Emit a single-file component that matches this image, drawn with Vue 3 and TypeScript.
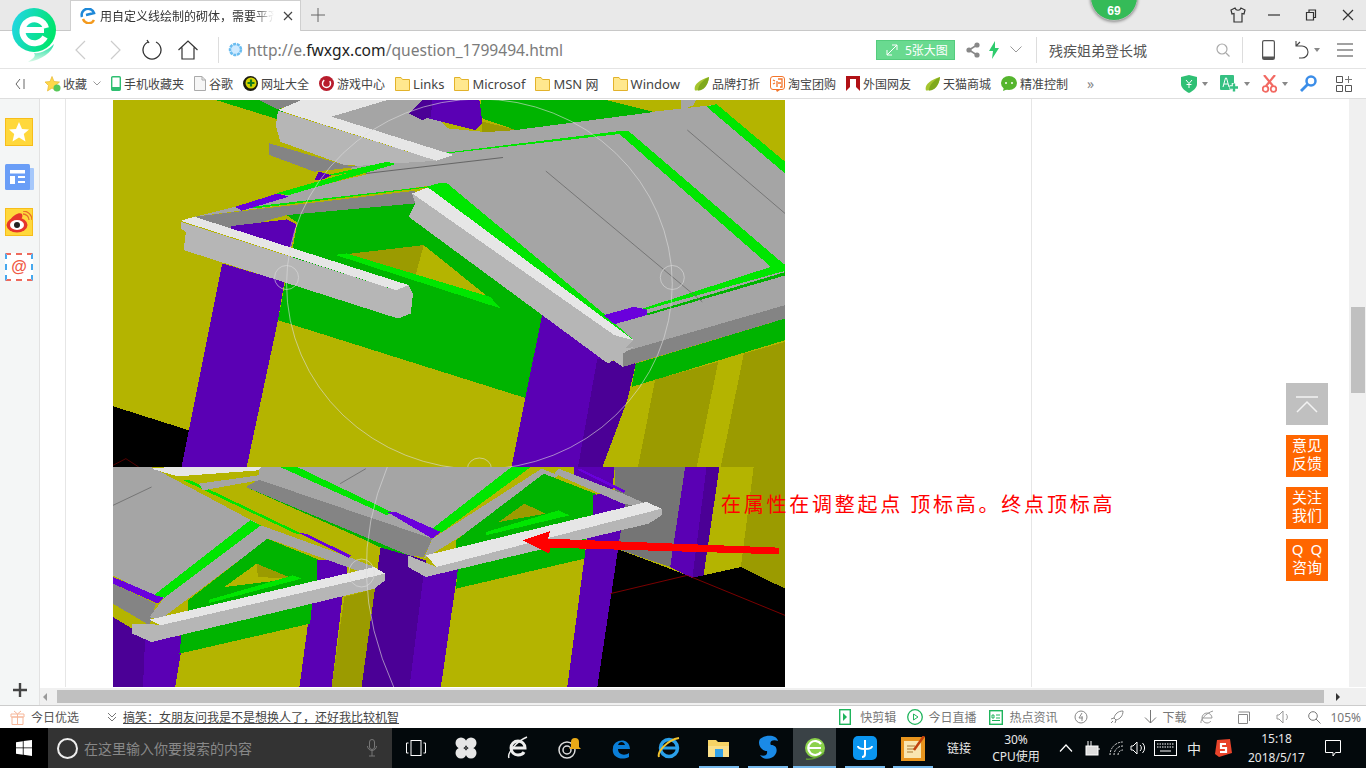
<script setup lang="ts">
type Shape = [string, string]
const Y = '#b4b400', DY = '#9b9b00', G = '#00b400', BG = '#00e600', P = '#5a00b4', DP = '#4b0096', BP = '#6a00dc'
const S = '#a5a5a5', L = '#b6b6b6', W = '#e6e6e6', D = '#848484'
const topShapes: Shape[] = [
  ['#000', '0,918 177,990 160,1100 0,1100'],
  [G, '240,0 345,0 400,30 385,58'],
  [D, '340,0 445,0 385,28'],
  [S, '510,50 640,0 720,0 780,85 860,95 1260,35 1400,15 1568,190 1568,620 1190,755 1145,645 780,250 190,350 600,220 540,200 755,170'],
  [DY, '862,65 945,90 860,97'],
  [G, '850,50 860,0 1150,0 1262,36 940,90'],
  [P, '690,40 722,0 855,0 862,68 845,90'],
  [DP, '690,40 722,0 745,0 742,50 722,60'],
  [S, '1325,0 1360,0 1355,15 1325,32'],
  [BG, '775,158 1190,92 1205,92 1195,100 780,160'],
  [BG, '1180,100 1202,92 1568,495 1568,515 1535,500'],
  [BG, '1385,20 1408,12 1568,185 1568,220'],
  [BG, '1220,632 1535,500 1568,490 1568,512 1245,628'],
  [G, '1245,640 1568,516 1568,526 1245,646'],
  [D, '190,350 705,272 705,310 405,345 275,392'],
  [G, '430,368 405,345 705,310 690,348 1002,645 962,893 385,660 402,545 420,440'],
  [DY, '545,462 725,435 705,530'],
  [Y, '725,435 880,595 705,530'],
  [BG, '518,464 545,460 880,590 905,625'],
  [P, '275,378 405,358 428,372 415,448 275,392'],
  [P, '255,490 400,545 385,660 312,1100 160,1100 177,990'],
  [P, '1002,640 1135,760 1155,790 1220,790 1200,900 1142,1100 930,1100 962,893'],
  [DP, '1130,775 1220,790 1200,900 1142,1100 1085,1100'],
  [D, '1190,755 1568,615 1568,655 1190,800'],
  [G, '1220,790 1568,655 1568,720 1210,860'],
  [Y, '1210,860 1568,722 1568,1100 1172,1100'],
  [DY, '1265,838 1412,785 1362,1100 1225,1100'],
  [DY, '1472,760 1568,725 1568,1100 1418,1100'],
  [BG, '380,280 640,185 660,192 410,285'],
  [BG, '310,322 730,260 760,250 780,250 1145,640 1215,720 735,262 330,325'],
  [BP, '285,320 385,280 410,290 300,332'],
  [BP, '1145,645 1215,620 1245,628 1245,645 1170,672'],
  [L, '705,310 698,280 1170,705 1215,720 1195,745 1180,770 1155,790 690,350'],
  [W, '698,280 735,262 1215,720 1190,712 1170,705'],
  [L, '1170,750 1195,745 1215,740 1190,760 1190,800 1168,782'],
  [L, '158,365 660,570 690,555 700,580 695,640 665,655 165,450 170,395 158,385'],
  [W, '158,362 190,350 690,555 660,570'],
  [D, '365,130 540,195 575,200 470,215 365,165'],
  [L, '385,32 755,182 575,197 540,195 390,125 380,75'],
  [W, '385,30 440,0 640,0 510,50 795,165 755,182'],
  [P, '470,240 480,215 510,225 490,238'],
  [BG, '500,225 640,185 660,192 520,225'],
]
const bottomShapes: Shape[] = [
  ['#000', '1130,680 1175,265 1340,345 1465,320 1568,385 1568,680'],
  ['#757575', '1170,20 1340,20 1300,320 1175,265'],
  [P, '1335,20 1415,20 1375,340 1350,352 1300,320'],
  [DP, '1385,20 1415,20 1378,345 1352,352'],
  [Y, '1415,20 1495,20 1465,320 1378,345'],
  [DY, '1495,20 1568,20 1568,385 1465,320'],
  [P, '1120,100 1195,125 1130,680 1060,680'],
  [P, '1075,20 1170,20 1165,95 1075,55'],
  [DY, '540,410 612,385 580,680 510,680'],
  [P, '475,300 545,310 510,680 435,680'],
  [DP, '625,255 730,300 700,680 580,680'],
  [P, '725,340 805,325 765,680 692,680'],
  [DP, '0,470 90,540 80,680 0,680'],
  [P, '75,530 165,525 145,680 70,680'],
  [G, '155,580 460,490 465,425 160,520'],
  [G, '800,385 1100,295 1105,225 805,320'],
  [G, '310,80 345,80 690,285 625,262 590,240'],
  [S, '0,20 90,20 345,195 110,420 0,345'],
  [BG, '95,405 320,180 345,195 120,412'],
  [BP, '0,350 100,405 118,412 105,430 0,370'],
  [D, '0,370 100,430 85,495 0,430'],
  [S, '120,412 345,195 362,235 110,478 85,470'],
  [G, '175,420 360,235 480,298 480,370 175,470'],
  [Y, '260,380 335,310 420,355'],
  [DY, '335,310 420,355 338,350'],
  [BG, '225,418 420,345 440,355 225,428'],
  [P, '475,300 545,295 545,345 475,370'],
  [S, '345,195 550,290 610,320 590,340 362,235'],
  [BG, '165,60 180,60 440,220 430,222'],
  [BP, '435,218 450,220 555,285 550,292'],
  [L, '45,490 85,490 110,495 635,340 635,360 610,385 90,545 45,520'],
  [W, '85,478 610,320 635,340 110,495'],
  [D, '310,80 340,58 745,235 725,290 690,285'],
  [S, '200,70 340,45 340,60 210,90'],
  [W, '90,25 130,20 345,20 340,30 150,48'],
  [S, '340,30 345,20 930,20 745,215 745,235 340,58'],
  [BG, '390,20 430,20 650,155 640,165'],
  [BG, '740,210 930,20 975,20 768,215'],
  [BP, '640,155 660,155 765,215 745,235'],
  [S, '745,235 1000,25 1040,45 765,265 725,295'],
  [G, '800,240 1005,40 1125,100 1120,185 800,280'],
  [DY, '900,185 960,130 1010,160'],
  [G, '960,130 1000,120 1040,150 1010,155'],
  [BG, '870,215 1040,150 1065,165 870,225'],
  [P, '1120,105 1140,100 1195,125 1195,150 1120,180'],
  [S, '1040,25 1190,100 1240,128 1215,135 1190,130 1030,40'],
  [BP, '1080,25 1090,25 1195,90 1192,98'],
  [L, '688,285 725,305 755,320 1280,145 1280,165 1250,190 730,350 688,320'],
  [W, '730,285 1245,125 1280,145 755,320'],
  ['#ff0000', '955,240 1020,212 1015,235 1555,262 1555,282 1020,262 1018,280'],
]
const bookmarks = [
  { text: '手机收藏夹', icon: 'phone', cls: '' },
  { text: '谷歌', icon: 'doc', cls: '' },
  { text: '网址大全', icon: 'nav', cls: '' },
  { text: '游戏中心', icon: 'game', cls: '' },
  { text: 'Links', icon: 'folder', cls: 'latin' },
  { text: 'Microsof', icon: 'folder', cls: 'latin' },
  { text: 'MSN 网', icon: 'folder', cls: 'latin wide' },
  { text: 'Window', icon: 'folder', cls: 'latin wide' },
  { text: '品牌打折', icon: 'leaf', cls: '' },
  { text: '淘宝团购', icon: 'tao', cls: '' },
  { text: '外国网友', icon: 'flag', cls: 'wide' },
  { text: '天猫商城', icon: 'leaf', cls: '' },
  { text: '精准控制', icon: 'chat', cls: '' },
]
const floats = [['意见', '反馈'], ['关注', '我们'], ['Q Q', '咨询']]
</script>

<template>
  <div class="screen">
    <svg class="logo" width="50" height="58" viewBox="0 0 50 58">
      <defs>
        <linearGradient id="lg" x1="0" y1="0" x2="1" y2="0.3"><stop offset="0" stop-color="#25d5ee" /><stop offset="1" stop-color="#00e56f" /></linearGradient>
        <linearGradient id="tail" x1="0" y1="0" x2="0" y2="1"><stop offset="0" stop-color="#18dfa0" /><stop offset="1" stop-color="#d8f9e6" /></linearGradient>
      </defs>
      <path d="M24 47 C30 48 38 44 44 38 C42 46 32 54 18 56 C24 52 26 50 24 47Z" fill="url(#tail)" />
      <circle cx="24" cy="24" r="22" fill="url(#lg)" />
      <path d="M10 24 H34 M35 31 A12 12 0 1 1 36 22" fill="none" stroke="#fff" stroke-width="6" />
    </svg>
    <div class="badge"><span>69</span></div>

    <header class="tabbar">
      <div class="tab">
        <svg width="16" height="16" viewBox="0 0 16 16"><path d="M2 9 A6 6 0 0 1 14 5 L6 7" fill="none" stroke="#1e88d8" stroke-width="2.5" /><path d="M3 11 A6 6 0 0 0 14 12" fill="none" stroke="#f39a1e" stroke-width="2.5" /></svg>
        <span class="tab-title">用自定义线绘制的砌体，需要平齐</span>
        <svg class="tab-x" width="10" height="10" viewBox="0 0 10 10"><path d="M1 1 9 9M9 1 1 9" stroke="#444" stroke-width="1.2" /></svg>
      </div>
      <svg class="plus" width="14" height="14" viewBox="0 0 14 14"><path d="M7 0V14M0 7H14" stroke="#666" /></svg>
      <div class="win">
        <svg class="shirt" width="16" height="16" viewBox="0 0 16 16"><path d="M5 1 1 3 2 7 4 6.500 4 15H12V6.500L14 7 15 3 11 1C10 4 6 4 5 1Z" fill="none" stroke="#333" stroke-width="1.200" /></svg>
        <svg width="12" height="12" viewBox="0 0 12 12"><path d="M0 6H12" stroke="#333" stroke-width="1.200" /></svg>
        <svg width="12" height="12" viewBox="0 0 12 12"><path d="M1.500 3.500H8.500V11H1.500ZM4 3.500V1H10.500V8.500H8.500" fill="none" stroke="#333" stroke-width="1.200" /></svg>
        <svg width="12" height="12" viewBox="0 0 12 12"><path d="M1 1 11 11M11 1 1 11" stroke="#333" stroke-width="1.200" /></svg>
      </div>
    </header>

    <nav class="addr">
      <div class="nav-btns">
        <svg width="11" height="20" viewBox="0 0 11 20"><path d="M10 1 1 10 10 19" fill="none" stroke="#ccc" stroke-width="1.200" /></svg>
        <svg width="11" height="20" viewBox="0 0 11 20"><path d="M1 1 10 10 1 19" fill="none" stroke="#ccc" stroke-width="1.200" /></svg>
        <svg class="refresh" width="20" height="22" viewBox="0 0 20 22"><path d="M6 3 A9 9 0 1 0 14 3 M5 1 7 4" fill="none" stroke="#333" stroke-width="1.300" /></svg>
        <svg class="home" width="20" height="20" viewBox="0 0 20 20"><path d="M0.500 10 10 1 19.500 10M4 7.500V19H16V7.500" fill="none" stroke="#333" stroke-width="1.200" /></svg>
      </div>
      <i class="sep first"></i>
      <svg class="globe" width="15" height="15" viewBox="0 0 15 15"><circle cx="7.500" cy="7.500" r="5.500" fill="#cfeaff" stroke="#6bbdf0" stroke-width="2.500" stroke-dasharray="3 0.800" /></svg>
      <div class="url">http://e.<b>fwxgx.com</b>/question_1799494.html</div>
      <div class="big-pic">
        <svg width="12" height="12" viewBox="0 0 12 12"><path d="M1 11 11 1M6 1H11V6M1 6V11H6" fill="none" stroke="#fff" /></svg>
        <span>5张大图</span>
      </div>
      <svg class="share" width="14" height="16" viewBox="0 0 14 16"><path d="M3 8 11 3M3 8 11 13" stroke="#888" stroke-width="1.500" /><circle cx="3" cy="8" r="2.600" fill="#888" /><circle cx="11" cy="3" r="2.600" fill="#888" /><circle cx="11" cy="13" r="2.600" fill="#888" /></svg>
      <svg class="bolt" width="10" height="18" viewBox="0 0 10 18"><path d="M6 0 0 10H4L3 18 10 7H6Z" fill="#2ecb6c" /></svg>
      <svg class="chev" width="12" height="7" viewBox="0 0 12 7"><path d="M0.500 0.500 6 6 11.500 0.500" fill="none" stroke="#999" /></svg>
      <i class="sep s2"></i>
      <div class="search">残疾姐弟登长城</div>
      <svg class="find" width="14" height="14" viewBox="0 0 14 14"><circle cx="6" cy="6" r="5" fill="none" stroke="#aaa" stroke-width="1.200" /><path d="M10 10 13.500 13.500" stroke="#aaa" stroke-width="1.200" /></svg>
      <i class="sep s3"></i>
      <svg class="mob" width="13" height="20" viewBox="0 0 13 20"><rect x="0.600" y="0.600" width="11.800" height="18.800" rx="1.500" fill="none" stroke="#555" stroke-width="1.200" /><path d="M1 16.500H12V19H1Z" fill="#555" /></svg>
      <svg class="undo" width="15" height="20" viewBox="0 0 15 20"><path d="M1 1V6H7A6 6 0 0 1 7 18H4M1 6 5 2" fill="none" stroke="#444" stroke-width="1.100" /></svg>
      <i class="caret c1"></i>
      <svg class="menu" width="16" height="14" viewBox="0 0 16 14"><path d="M0 1H16M0 7H16M0 13H16" stroke="#444" stroke-width="1.200" /></svg>
    </nav>

    <div class="bookbar">
      <svg class="collapse" width="10" height="12" viewBox="0 0 10 12"><path d="M5 1 1 6 5 11M9 1V11" fill="none" stroke="#666" /></svg>
      <div class="fav">
        <svg width="16" height="16" viewBox="0 0 16 16"><path d="M7 0.500 9 5.500 14.500 6 10.500 9.500 11.500 15 7 12 2.500 15 3.500 9.500 0 6 5 5.500Z" fill="#ffd84a" stroke="#e8b830" stroke-width="0.700" /><circle cx="12" cy="12" r="3.500" fill="#56c85a" /></svg>
        <span>收藏</span>
        <svg class="fav-c" width="8" height="5" viewBox="0 0 8 5"><path d="M0.500 0.500 4 4 7.500 0.500" fill="none" stroke="#999" /></svg>
      </div>
      <div v-for="b in bookmarks" :key="b.text" class="bm" :class="b.cls">
        <svg v-if="b.icon === 'phone'" class="i-phone" width="10" height="15" viewBox="0 0 10 15"><rect x="0.700" y="0.700" width="8.600" height="13.600" rx="1" fill="#fff" stroke="#2fbf71" stroke-width="1.400" /><path d="M1 11H9V14H1Z" fill="#2fbf71" /></svg>
        <svg v-else-if="b.icon === 'doc'" width="12" height="15" viewBox="0 0 12 15"><path d="M0.500 0.500H8L11.500 4V14.500H0.500Z" fill="#f6f6f6" stroke="#aaa" /><path d="M8 0.500V4H11.500" fill="none" stroke="#aaa" /></svg>
        <svg v-else-if="b.icon === 'nav'" width="15" height="15" viewBox="0 0 15 15"><circle cx="7.500" cy="7.500" r="7.500" fill="#1b1b10" /><circle cx="8" cy="7" r="5.500" fill="#d5d400" /><path d="M8 3.500V10.500M4.500 7H11.500" stroke="#167b1c" stroke-width="2.200" /></svg>
        <svg v-else-if="b.icon === 'game'" width="15" height="15" viewBox="0 0 15 15"><circle cx="7.500" cy="7.500" r="7.500" fill="#b81c2c" /><circle cx="7.500" cy="7.500" r="4" fill="none" stroke="#fff" stroke-width="1.500" stroke-dasharray="16 6" /></svg>
        <svg v-else-if="b.icon === 'folder'" width="15" height="14" viewBox="0 0 15 14"><path d="M0.500 13.500V0.500H6L7.500 2.500H14.500V13.500Z" fill="#ffe88e" stroke="#e2b22a" /></svg>
        <svg v-else-if="b.icon === 'leaf'" width="15" height="14" viewBox="0 0 15 14"><path d="M15 0C14 9 9 14 1 13.500 -1 8 5 3 15 0Z" fill="#a5c52e" /><path d="M15 0C14 9 9 14 4 13.500 4 8 9 3 15 0Z" fill="#7fa91d" /></svg>
        <svg v-else-if="b.icon === 'tao'" width="15" height="16" viewBox="0 0 15 16"><rect x="0.500" y="0.500" width="14" height="13" rx="2.500" fill="#fff" stroke="#f3752b" /><path d="M3 4 5 5M3 8 5 7M8 3H12V11H10M7 5V11M8 7H11" fill="none" stroke="#f3752b" stroke-width="1.300" /><path d="M6 14H10L7 16Z" fill="#f3752b" /></svg>
        <svg v-else-if="b.icon === 'flag'" width="14" height="15" viewBox="0 0 14 15"><path d="M0 0H14V15L10 11V3H4V11L0 15Z" fill="#b11116" /></svg>
        <svg v-else width="16" height="15" viewBox="0 0 16 15"><ellipse cx="8" cy="7" rx="8" ry="7" fill="#55b52e" /><path d="M3 11 2 15 7 13Z" fill="#55b52e" /><circle cx="5" cy="7" r="1" fill="#fff" /><circle cx="11" cy="7" r="1" fill="#fff" /></svg>
        <span>{{ b.text }}</span>
      </div>
      <span class="more">»</span>
      <div class="ext">
        <svg width="16" height="18" viewBox="0 0 16 18"><path d="M8 0 16 2V9C16 13 12 16 8 18 4 16 0 13 0 9V2Z" fill="#2fc074" /><path d="M5 5 8 8.500 11 5M8 8.500V13M5.500 9.500H10.500" fill="none" stroke="#fff" /></svg>
        <i class="caret"></i>
        <svg width="19" height="18" viewBox="0 0 19 18"><rect width="14" height="15" rx="1" fill="#35c082" /><path d="M3 12 5.500 3H6.500L9 12M4 9H8" fill="none" stroke="#fff" /><path d="M14 8V17M9.500 12.500H18.500" stroke="#fff" stroke-width="4.500" /><path d="M14 8.500V16.500M10 12.500H18" stroke="#35c082" stroke-width="2.400" /></svg>
        <i class="caret"></i>
        <svg width="15" height="18" viewBox="0 0 15 18"><path d="M2 0 11 11M13 0 4 11" stroke="#f26a63" stroke-width="2.200" /><circle cx="3.500" cy="14" r="2.800" fill="none" stroke="#f26a63" stroke-width="1.800" /><circle cx="11.500" cy="14" r="2.800" fill="none" stroke="#f26a63" stroke-width="1.800" /></svg>
        <i class="caret"></i>
        <svg width="17" height="17" viewBox="0 0 17 17"><circle cx="11" cy="6" r="4.500" fill="#fff" stroke="#3b8de8" stroke-width="2.500" /><path d="M8 9 1 16" stroke="#3b8de8" stroke-width="2.800" /></svg>
        <svg class="apps" width="16" height="16" viewBox="0 0 16 16"><path d="M0.500 0.500H6.500V6.500H0.500ZM0.500 9.500H6.500V15.500H0.500ZM9.500 9.500H15.500V15.500H9.500Z" fill="none" stroke="#555" /><path d="M12.500 0V7M9 3.500H16" stroke="#777" /></svg>
      </div>
    </div>

    <main class="body">
      <aside class="side">
        <div class="side-list">
          <div class="si star"><svg width="20" height="20" viewBox="0 0 20 20"><path d="M10 0 13 7 20 7.500 14.800 12 16.500 19.500 10 15.500 3.500 19.500 5.200 12 0 7.500 7 7Z" fill="#fff" /></svg></div>
          <div class="si news"><svg width="29" height="27" viewBox="0 0 29 27"><rect x="22" y="4" width="7" height="22" rx="1" fill="#a6c8fb" /><rect width="25" height="26" rx="1.500" fill="#6a9ef7" /><path d="M5 6H20V9.500H5ZM5 12H10V20H5Z" fill="#fff" /><path d="M13 13H20M13 18H20" stroke="#fff" stroke-width="2" /></svg></div>
          <div class="si star"><svg width="26" height="22" viewBox="0 0 26 22"><ellipse cx="11" cy="14" rx="10.500" ry="7.500" fill="#e6362b" /><path d="M4 9C8 3 14 1 16 3 17 5 16 7 15 8Z" fill="#e6362b" /><ellipse cx="11" cy="14" rx="7" ry="5" fill="#fff" /><circle cx="11" cy="14" r="3" fill="#222" /><path d="M17 3A6 6 0 0 1 23 9M17 0A9 9 0 0 1 26 9" fill="none" stroke="#e8702b" stroke-width="1.300" /></svg></div>
          <div class="si mail">@</div>
        </div>
        <div class="add"><svg width="14" height="14" viewBox="0 0 14 14"><path d="M7 0V14M0 7H14" stroke="#444" stroke-width="2.400" /></svg></div>
      </aside>
      <div class="view">
        <div class="page">
          <article class="article">
            <svg class="pic-top" width="672" height="367" viewBox="0 0 1568 1100" preserveAspectRatio="none">
              <rect width="1568" height="1100" fill="#b4b400" />
              <polygon v-for="(s, i) in topShapes" :key="i" :fill="s[0]" :points="s[1]" />
              <path d="M1010 213 1375 605M1340 90 1568 340" stroke="#666" stroke-width="2" fill="none" />
              <path d="M590 220 910 172" stroke="#666" stroke-width="3" />
              <ellipse cx="855" cy="552" rx="450" ry="555" fill="none" stroke="#ddd" stroke-width="1.600" />
              <ellipse cx="405" cy="532" rx="28" ry="36" fill="none" stroke="#ddd" stroke-width="1.600" />
              <ellipse cx="1305" cy="532" rx="28" ry="36" fill="none" stroke="#ddd" stroke-width="1.600" />
              <ellipse cx="855" cy="1105" rx="28" ry="32" fill="none" stroke="#ddd" stroke-width="1.600" />
              <path d="M0 1095 30 1075 60 1100" stroke="#d00" fill="none" />
            </svg>
            <div class="second">
              <svg class="pic-bot" width="672" height="220" viewBox="0 20 1568 660" preserveAspectRatio="none">
                <rect y="20" width="1568" height="660" fill="#b4b400" />
                <polygon v-for="(s, i) in bottomShapes" :key="i" :fill="s[0]" :points="s[1]" />
                <path d="M1160 400 1340 345 1568 465" stroke="#a00000" stroke-width="2" fill="none" />
                <path d="M640 20Q535 340 655 680" stroke="#ddd" stroke-width="1.600" fill="none" />
                <ellipse cx="580" cy="338" rx="30" ry="42" fill="none" stroke="#ddd" stroke-width="1.600" />
                <path d="M0 135 90 80M530 70 590 25" stroke="#666" stroke-width="2" fill="none" />
              </svg>
              <p class="note">在属性在调整起点 顶标高。终点顶标高</p>
            </div>
          </article>
          <div class="vbar"><div class="vthumb"></div></div>
          <div class="floats">
            <div class="to-top"><svg width="22" height="17" viewBox="0 0 22 17"><path d="M0 1H22M1 16 11 6 21 16" fill="none" stroke="#f2f2f2" stroke-width="1.500" /></svg></div>
            <div v-for="f in floats" :key="f[0]" class="fbtn"><span>{{ f[0] }}</span><span>{{ f[1] }}</span></div>
          </div>
        </div>
        <div class="hbar">
          <i class="tri left"></i>
          <div class="hthumb"></div>
          <i class="tri right"></i>
        </div>
      </div>
    </main>

    <footer class="status">
      <svg class="gift" width="15" height="15" viewBox="0 0 15 15"><path d="M1 4H14V7H1ZM2 7H13V14.500H2ZM7.500 4V14.500M4 1 7.500 4 11 1" fill="none" stroke="#f6b79a" /></svg>
      <span class="today">今日优选</span>
      <svg class="dbl" width="10" height="10" viewBox="0 0 10 10"><path d="M1 1 5 5 9 1M1 5 5 9 9 5" fill="none" stroke="#777" /></svg>
      <a class="news-link">搞笑：女朋友问我是不是想换人了，还好我比较机智</a>
      <div class="st-right">
        <div class="st g1"><svg width="12" height="16" viewBox="0 0 12 16"><rect x="0.700" y="0.700" width="10.600" height="14.600" fill="none" stroke="#1fb45c" stroke-width="1.400" /><path d="M4 4 8 8 4 12Z" fill="#1fb45c" /></svg><span>快剪辑</span></div>
        <div class="st g2"><svg width="16" height="16" viewBox="0 0 16 16"><circle cx="8" cy="8" r="7.300" fill="none" stroke="#1fb45c" stroke-width="1.300" /><path d="M6.500 5 11 8 6.500 11Z" fill="none" stroke="#1fb45c" /></svg><span>今日直播</span></div>
        <div class="st g3"><svg width="14" height="15" viewBox="0 0 14 15"><rect x="0.700" y="0.700" width="12.600" height="13.600" fill="none" stroke="#1fb45c" stroke-width="1.400" /><path d="M3 5H5V8H3ZM7 5H11M3 10.500H11M7 8H11" fill="none" stroke="#1fb45c" /></svg><span>热点资讯</span></div>
        <svg class="m-a" width="14" height="14" viewBox="0 0 14 14"><circle cx="7" cy="7" r="6" fill="none" stroke="#888" /><path d="M8 3 5 8H9M8 6V11" fill="none" stroke="#888" /></svg>
        <svg class="m-b" width="14" height="14" viewBox="0 0 14 14"><path d="M13 1C8 1 5 4 4 8L6 10C10 9 13 6 13 1ZM4 8 1 9M6 10 5 13M3 11 1 13" fill="none" stroke="#888" /></svg>
        <div class="st dl"><svg width="13" height="14" viewBox="0 0 13 14"><path d="M6.500 0V13M1 7.500 6.500 13 12 7.500" fill="none" stroke="#777" /></svg><span>下载</span></div>
        <svg class="m-c" width="14" height="14" viewBox="0 0 14 14"><path d="M2 8H12A5 5 0 1 0 7 13C9 13 10 12 11 11M1 13C0 10 6 3 13 1" fill="none" stroke="#999" /></svg>
        <svg class="m-d" width="12" height="13" viewBox="0 0 12 13"><path d="M0.500 3.500H9.500V12.500H0.500ZM0.500 1H11.500V10" fill="none" stroke="#888" /></svg>
        <svg class="m-e" width="14" height="14" viewBox="0 0 14 14"><path d="M1 5V9H3L7 13V1L3 5ZM10 4A4 4 0 0 1 10 10" fill="none" stroke="#999" /></svg>
        <svg class="m-f" width="13" height="13" viewBox="0 0 13 13"><circle cx="5" cy="5" r="4.300" fill="none" stroke="#777" /><path d="M8 8 12.500 12.500" stroke="#777" /></svg>
        <span class="zoom">105%</span>
      </div>
    </footer>

    <div class="taskbar">
      <div class="start"><svg width="16" height="16" viewBox="0 0 16 16"><path d="M0 2.200 6.800 1.200V7.500H0ZM7.600 1.100 16 0V7.500H7.600ZM0 8.300H6.800V14.700L0 13.800ZM7.600 8.300H16V16L7.600 14.800Z" fill="#fff" /></svg></div>
      <div class="tsearch">
        <i class="cortana"></i>
        <span>在这里输入你要搜索的内容</span>
        <svg width="10" height="18" viewBox="0 0 10 18"><rect x="2.500" y="0.500" width="5" height="10" rx="2.500" fill="none" stroke="#777" /><path d="M0.500 7A4.500 4.500 0 0 0 9.500 7M5 12V17M2 17H8" fill="none" stroke="#777" /></svg>
      </div>
      <div class="tasks">
        <div class="task"><svg width="20" height="16" viewBox="0 0 20 16"><rect x="5" y="0.500" width="10" height="15" fill="none" stroke="#fff" /><path d="M2.500 3H0.500V13H2.500M17.500 3H19.500V13H17.500" fill="none" stroke="#fff" /></svg></div>
        <div class="task"><svg width="22" height="22" viewBox="0 0 22 22"><circle cx="6" cy="6" r="5.500" fill="#e6e6e6" /><circle cx="16" cy="6" r="5.500" fill="#e6e6e6" /><circle cx="6" cy="16" r="5.500" fill="#e6e6e6" /><circle cx="16" cy="16" r="5.500" fill="#e6e6e6" /><circle cx="11" cy="11" r="1.500" fill="#555" /></svg></div>
        <div class="task"><svg width="22" height="24" viewBox="0 0 22 24"><path d="M4 12H18A7 7 0 1 0 11 19C14 19 16 18 17 16" fill="none" stroke="#eee" stroke-width="3" /><path d="M2 22C0 18 8 6 20 1" fill="none" stroke="#eee" stroke-width="1.500" /></svg></div>
        <div class="task"><svg width="26" height="24" viewBox="0 0 26 24"><circle cx="10" cy="14" r="8" fill="none" stroke="#ddd" stroke-width="1.500" /><circle cx="10" cy="14" r="4" fill="none" stroke="#ddd" stroke-width="1.500" /><path d="M14 11V6A4 4 0 0 1 22 6V11L24 13H12Z" fill="#e8a917" /></svg></div>
        <div class="task"><svg width="20" height="22" viewBox="0 0 20 22"><path d="M2 11 C2 3 18 -1 19 12H7 C7 18 14 19 18 16V20C10 24 0 20 2 11ZM7 8H14C13 4 8 4 7 8Z" fill="#0a7ed8" /></svg></div>
        <div class="task"><svg width="24" height="24" viewBox="0 0 24 24"><circle cx="12" cy="12" r="8.500" fill="none" stroke="#2aa0ea" stroke-width="3.500" /><path d="M4 12H20" stroke="#2aa0ea" stroke-width="3" /><path d="M2 21C0 16 10 4 22 2" fill="none" stroke="#f2c32e" stroke-width="2" /></svg></div>
        <div class="task blue"><svg width="22" height="20" viewBox="0 0 22 20"><path d="M0 2H8L10 4H21V19H0Z" fill="#f6d365" /><path d="M0 8H21V19H0Z" fill="#fbe08a" /><rect x="7" y="11" width="8" height="8" fill="#33a2e8" /></svg></div>
        <div class="task blue"><svg width="22" height="26" viewBox="0 0 22 26"><path d="M3 4C9 -1 20 0 21 6 15 4 12 7 14 10 20 10 21 16 18 20 14 25 6 25 3 20 7 22 11 20 10 16 4 16 0 9 3 4Z" fill="#1a8ae6" /></svg></div>
        <div class="task active"><svg width="22" height="26" viewBox="0 0 22 26"><circle cx="11" cy="13" r="10" fill="#8bd14a" /><path d="M5 13H17M17 17A7 7 0 1 1 17 9" fill="none" stroke="#fff" stroke-width="2.200" /><path d="M2 24C8 25 16 22 20 18" fill="none" stroke="#5c9a30" stroke-width="1.500" /></svg></div>
        <div class="task blue"><svg width="24" height="24" viewBox="0 0 24 24"><rect width="24" height="24" rx="5" fill="#0a95f0" /><path d="M12 4V18A3 3 0 0 1 9 21M5 10C5 14 19 14 19 10" fill="none" stroke="#fff" stroke-width="2" /></svg></div>
        <div class="task blue"><svg width="24" height="25" viewBox="0 0 24 25"><rect y="1" width="24" height="24" fill="#e8951e" /><rect x="3" y="5" width="17" height="17" fill="#f9e6b0" /><path d="M6 10H14M6 13H14M6 16H12" stroke="#a87930" /><path d="M23 0 13 14" stroke="#c2410c" stroke-width="2.500" /></svg></div>
      </div>
      <span class="tlink">链接</span>
      <div class="cpu"><span>30%</span><span>CPU使用</span></div>
      <div class="tray">
        <svg width="14" height="8" viewBox="0 0 14 8"><path d="M1 7.500 7 1 13 7.500" fill="none" stroke="#fff" stroke-width="1.200" /></svg>
        <svg width="17" height="15" viewBox="0 0 17 15"><rect x="3" y="5" width="12" height="9" fill="#ddd" stroke="#fff" /><path d="M5 0V5M8 0V5M15 8H17" stroke="#fff" /></svg>
        <svg width="16" height="15" viewBox="0 0 16 15"><path d="M1 14A13 13 0 0 1 14 1M5 14A9 9 0 0 1 14 5M9 14A5 5 0 0 1 14 9" fill="none" stroke="#ddd" stroke-dasharray="2 1" /></svg>
        <svg width="16" height="16" viewBox="0 0 16 16"><path d="M1 6V10H3L7 14V2L3 6ZM10 5A4 4 0 0 1 10 11M12.500 3A7 7 0 0 1 12.500 13" fill="none" stroke="#fff" /></svg>
        <svg width="23" height="16" viewBox="0 0 23 16"><rect x="0.500" y="0.500" width="22" height="15" fill="none" stroke="#fff" /><path d="M3 4H20M3 7H20" stroke="#fff" stroke-dasharray="1.500 1" /><path d="M6 11H17" stroke="#fff" /></svg>
        <span class="ime">中</span>
        <svg width="18" height="18" viewBox="0 0 18 18"><path d="M3 1 16 0 18 14 5 18 1 15Z" fill="#e8442b" /><path d="M12 5H7V9H12V13H6" fill="none" stroke="#fff" stroke-width="2.200" /></svg>
      </div>
      <div class="clock"><span>15:18</span><span>2018/5/17</span></div>
      <svg class="notify" width="16" height="17" viewBox="0 0 16 17"><path d="M0.500 0.500H15.500V12.500H10.500L8 16 8 12.500H0.500Z" fill="none" stroke="#fff" /></svg>
    </div>
  </div>
</template>

<style scoped>
.screen {
  position: relative;
  width: 1366px;
  height: 768px;
  display: flex;
  flex-direction: column;
  overflow: hidden;
  background: #fff;
  font-family: "Noto Sans", "Noto Sans CJK SC", sans-serif;
  color: #444;
}
svg { display: block; flex: none; }
polygon { shape-rendering: crispEdges; }
.logo { position: absolute; left: 10px; top: 6px; z-index: 3; }
.badge {
  position: absolute;
  left: 1090px;
  top: -27px;
  width: 46px;
  height: 46px;
  border-radius: 50%;
  background: #35bb58;
  border: 1px solid #bbb;
  box-shadow: 0 1px 3px rgba(0, 0, 0, .4);
  display: flex;
  align-items: flex-end;
  justify-content: center;
  color: #fff;
  font: bold 12px/17px "Liberation Sans", sans-serif;
  z-index: 3;
}
.tabbar {
  height: 30px;
  flex: none;
  display: flex;
  align-items: stretch;
  padding-left: 70px;
  background: #e9e9e9;
  border-bottom: 1px solid #c8c8c8;
}
.tab {
  width: 231px;
  height: 31px;
  box-sizing: border-box;
  background: #fff;
  border: 1px solid #cfcfcf;
  border-width: 1px 1px 0;
  display: flex;
  align-items: center;
  padding-left: 9px;
}
.tab-title {
  width: 174px;
  margin-left: 4px;
  overflow: hidden;
  white-space: nowrap;
  font-size: 12px;
  color: #333;
  -webkit-mask-image: linear-gradient(90deg, #000 88%, transparent);
  mask-image: linear-gradient(90deg, #000 88%, transparent);
}
.tab-x { margin-left: 9px; }
.plus { align-self: center; margin-left: 10px; }
.win { margin-left: auto; display: flex; align-items: center; padding-right: 12px; }
.win svg { margin-left: 25px; }
.win .shirt { margin-right: -3px; }
.addr {
  height: 37px;
  flex: none;
  display: flex;
  align-items: center;
  background: #fff;
  border-bottom: 1px solid #e4e4e4;
}
.nav-btns { display: flex; align-items: center; padding-left: 75px; gap: 24px; }
.refresh { margin-left: -3px; }
.home { margin-left: -8px; }
.sep { display: block; width: 1px; height: 26px; background: #ddd; flex: none; }
.sep.first { margin-left: 20px; }
.globe { margin-left: 9px; }
.url { margin-left: 4px; width: 629px; font: 15.600px "Noto Sans", sans-serif; color: #7b7b7b; white-space: nowrap; }
.url b { font-weight: 400; color: #222; }
.big-pic {
  width: 79px;
  height: 20px;
  box-sizing: border-box;
  background: #69da90;
  border: 1px solid #54cc7d;
  display: flex;
  align-items: center;
  padding-left: 9px;
  gap: 7px;
  color: #fff;
  font-size: 12px;
}
.share { margin-left: 11px; }
.bolt { margin-left: 9px; }
.chev { margin-left: 11px; }
.sep.s2 { margin-left: 14px; }
.search { margin-left: 12px; width: 167px; font-size: 14px; color: #555; white-space: nowrap; }
.find { margin-left: 0; }
.sep.s3 { margin-left: 12px; }
.mob { margin-left: 19px; }
.undo { margin-left: 20px; }
.caret {
  display: block;
  width: 0;
  height: 0;
  border: 3px solid transparent;
  border-top: 4px solid #888;
  border-bottom: 0;
  flex: none;
}
.caret.c1 { margin-left: 4px; }
.menu { margin-left: 17px; }
.bookbar {
  height: 30px;
  flex: none;
  display: flex;
  align-items: center;
  font-size: 12px;
  background: #fff;
  border-bottom: 1px solid #dedede;
  box-sizing: border-box;
}
.collapse { margin-left: 15px; }
.fav { display: flex; align-items: center; margin-left: 20px; }
.fav span { margin-left: 2px; }
.fav-c { margin-left: 6px; }
.bm { display: flex; align-items: center; margin-left: 10px; gap: 3px; white-space: nowrap; }
.bm.latin span { font-size: 13px; }
.bm.wide + .bm { margin-left: 14px; }
.more { margin-left: 19px; color: #888; font-size: 14px; }
.ext { margin-left: auto; display: flex; align-items: center; padding-right: 14px; }
.ext .caret { margin: 0 12px 0 5px; }
.apps { margin-left: 19px; }
.body { flex: 1; min-height: 0; display: flex; }
.side {
  width: 40px;
  flex: none;
  box-sizing: border-box;
  background: #f4f6f6;
  border-right: 1px solid #e2e2e2;
  display: flex;
  flex-direction: column;
}
.side-list { flex: 1; display: flex; flex-direction: column; padding: 19px 0 0 5px; gap: 17px; }
.si { width: 28px; height: 28px; box-sizing: border-box; display: flex; align-items: center; justify-content: center; }
.si.star { background: #ffd83c; border: 1px solid #f7bd1a; }
.si.mail {
  color: #ef5a45;
  font: bold 16px "Liberation Sans", sans-serif;
  background: #fff;
  border: 2px dashed #ee6a5c;
  border-right-color: #46a8ee;
  border-left-color: #46a8ee;
}
.add { height: 30px; display: flex; justify-content: center; align-items: center; }
.view { flex: 1; min-width: 0; display: flex; flex-direction: column; }
.page { position: relative; flex: 1; min-height: 0; display: flex; overflow: hidden; padding-left: 25px; }
.article {
  width: 967px;
  box-sizing: border-box;
  padding: 1px 0 0 47px;
  border-left: 1px solid #e6e6e6;
  border-right: 1px solid #e6e6e6;
}
.pic-top, .pic-bot { display: block; }
.second { display: flex; width: 1000px; }
.note {
  margin: 25px 0 0 -64px;
  font: 20px/24px "Noto Sans CJK SC", sans-serif;
  letter-spacing: 2.760px;
  color: #f00;
  white-space: nowrap;
}
.vbar { margin-left: auto; width: 17px; background: #f0f0f0; position: relative; flex: none; }
.vthumb { position: absolute; top: 208px; left: 2px; width: 14px; height: 86px; background: #c0c0c0; }
.floats {
  position: absolute;
  left: 1246px;
  top: 284px;
  width: 42px;
  display: flex;
  flex-direction: column;
  gap: 10px;
}
.to-top { height: 42px; background: #c0c0c0; display: flex; align-items: center; justify-content: center; }
.fbtn {
  height: 42px;
  box-sizing: border-box;
  padding-bottom: 4px;
  background: #ff6600;
  color: #fff;
  font-size: 15px;
  line-height: 18px;
  word-spacing: 3px;
  display: flex;
  flex-direction: column;
  align-items: center;
  justify-content: center;
}
.hbar { height: 18px; flex: none; display: flex; align-items: center; background: #f0f0f0; border-top: 1px solid #fff; box-sizing: border-box; }
.hthumb { width: 1267px; height: 13px; background: #c0c0c0; margin-left: 10px; }
.tri { display: block; width: 0; height: 0; border: 4px solid transparent; flex: none; }
.tri.left { margin-left: 3px; border-right: 4px solid #999; border-left: 0; }
.tri.right { margin-left: 12px; border-left: 4px solid #333; border-right: 0; }
.status {
  height: 23px;
  flex: none;
  box-sizing: border-box;
  display: flex;
  align-items: center;
  font-size: 12px;
  color: #555;
  background: #fff;
  border-top: 1px solid #ccc;
}
.gift { margin-left: 10px; }
.today { margin-left: 6px; }
.dbl { margin-left: 28px; }
.news-link { margin-left: 6px; text-decoration: underline; white-space: nowrap; color: #444; }
.st-right { margin-left: auto; display: flex; align-items: center; padding-right: 5px; }
.st { display: flex; align-items: center; gap: 9px; color: #777; white-space: nowrap; }
.g2 { margin-left: 11px; gap: 5px; }
.g3 { margin-left: 13px; gap: 6px; }
.m-a { margin-left: 17px; }
.m-b { margin-left: 22px; }
.dl { margin-left: 20px; gap: 5px; }
.m-c { margin-left: 14px; }
.m-d { margin-left: 24px; }
.m-e { margin-left: 26px; }
.m-f { margin-left: 18px; }
.zoom { margin-left: 9px; color: #777; }
.taskbar {
  height: 40px;
  flex: none;
  display: flex;
  align-items: center;
  background: #03090c;
  color: #e8e8e8;
  font-size: 12px;
}
.start { width: 48px; height: 100%; background: #000; display: flex; align-items: center; justify-content: center; }
.tsearch {
  width: 344px;
  height: 100%;
  box-sizing: border-box;
  background: #333;
  display: flex;
  align-items: center;
  padding: 0 15px 0 9px;
  color: #888;
  font-size: 14px;
}
.tsearch span { flex: 1; margin-left: 6px; }
.cortana { display: block; width: 21px; height: 21px; box-sizing: border-box; border: 2px solid #eee; border-radius: 50%; }
.tasks { display: flex; height: 100%; }
.task { position: relative; width: 40px; flex: none; display: flex; align-items: center; justify-content: center; }
.task:nth-child(1) { margin-left: 4px; }
.task:nth-child(2) { margin-left: 10px; }
.task:nth-child(3) { margin-left: 12px; }
.task:nth-child(4) { margin-left: 12px; }
.task:nth-child(5) { margin-left: 11px; }
.task:nth-child(6) { margin-left: 8px; }
.task:nth-child(7) { margin-left: 10px; }
.task:nth-child(8) { margin-left: 9px; }
.task:nth-child(9) { margin-left: 5px; width: 43px; }
.task:nth-child(10) { margin-left: 9px; }
.task:nth-child(11) { margin-left: 8px; }
.task.blue::after, .task.active::after {
  content: "";
  position: absolute;
  left: 0;
  right: 0;
  bottom: 0;
  height: 2px;
  background: #76b9ed;
}
.task.active { background: #3a4246; }
.tlink { margin-left: 14px; width: 28px; }
.cpu { margin-left: 16px; width: 50px; display: flex; flex-direction: column; align-items: center; line-height: 17px; }
.tray { margin-left: 18px; display: flex; align-items: center; }
.tray > :nth-child(2) { margin-left: 10px; }
.tray > :nth-child(3) { margin-left: 9px; }
.tray > :nth-child(4) { margin-left: 5px; }
.tray > :nth-child(5) { margin-left: 8px; }
.tray > :nth-child(6) { margin-left: 10px; }
.tray > :nth-child(7) { margin-left: 13px; }
.ime { font-size: 14px; }
.clock { margin-left: 15px; width: 59px; display: flex; flex-direction: column; align-items: center; line-height: 19px; white-space: nowrap; }
.notify { margin-left: 19px; }
</style>

<style>
html, body { margin: 0; overflow: hidden; background: #fff; }
</style>
